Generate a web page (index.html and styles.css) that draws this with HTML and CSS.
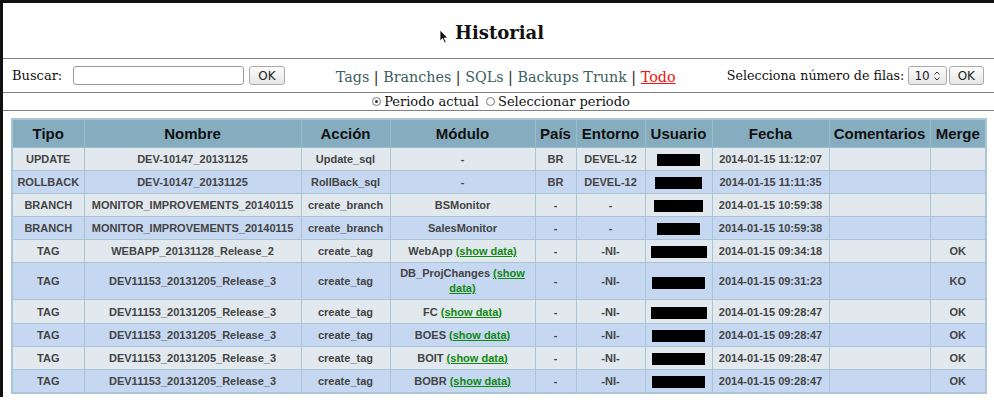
FILE: index.html
```html
<!DOCTYPE html>
<html>
<head>
<meta charset="utf-8">
<link rel="stylesheet" href="styles.css">
</head>
<body>
<div class="frame">
  <div class="titlebar">
    <h1 class="title">Historial</h1>
    <svg class="cursor" width="10" height="15" viewBox="0 0 10 15"><path d="M1 1 L1 12 L3.6 9.6 L5.6 14 L7.2 13.3 L5.3 9 L8.8 9 Z" fill="#111" stroke="#fff" stroke-width="0.8"/></svg>
  </div>
  <div class="toolbar">
    <div class="search">
      <span class="lbl">Buscar:</span>
      <span class="input"></span>
      <span class="btn">OK</span>
    </div>
    <div class="links">
      <a class="lk">Tags</a> | <a class="lk">Branches</a> | <a class="lk">SQLs</a> | <a class="lk">Backups Trunk</a> | <a class="lk active">Todo</a>
    </div>
    <div class="rows">
      <span class="lbl">Selecciona número de filas:</span>
      <span class="select">10<svg width="8" height="12" viewBox="0 0 8 12"><path d="M1.5 4.5 L4 2 L6.5 4.5 M1.5 7.5 L4 10 L6.5 7.5" fill="none" stroke="#333" stroke-width="1"/></svg></span>
      <span class="btn">OK</span>
    </div>
  </div>
  <div class="periods">
    <span class="radio on"></span>Periodo actual <span class="radio second"></span>Seleccionar periodo
  </div>
  <div class="tablewrap">
    <table class="grid">
      <colgroup>
        <col class="c1"><col class="c2"><col class="c3"><col class="c4"><col class="c5"><col class="c6"><col class="c7"><col class="c8"><col class="c9"><col class="c10">
      </colgroup>
      <thead>
        <tr><th>Tipo</th><th>Nombre</th><th>Acción</th><th>Módulo</th><th>País</th><th>Entorno</th><th>Usuario</th><th>Fecha</th><th>Comentarios</th><th>Merge</th></tr>
      </thead>
      <tbody>
        <tr class="odd"><td>UPDATE</td><td>DEV-10147_20131125</td><td>Update_sql</td><td>-</td><td>BR</td><td>DEVEL-12</td><td><span class="redact" style="width:43px"></span></td><td>2014-01-15 11:12:07</td><td></td><td></td></tr>
        <tr class="even"><td>ROLLBACK</td><td>DEV-10147_20131125</td><td>RollBack_sql</td><td>-</td><td>BR</td><td>DEVEL-12</td><td><span class="redact" style="width:47px"></span></td><td>2014-01-15 11:11:35</td><td></td><td></td></tr>
        <tr class="odd"><td>BRANCH</td><td>MONITOR_IMPROVEMENTS_20140115</td><td>create_branch</td><td>BSMonitor</td><td>-</td><td>-</td><td><span class="redact" style="width:49px"></span></td><td>2014-01-15 10:59:38</td><td></td><td></td></tr>
        <tr class="even"><td>BRANCH</td><td>MONITOR_IMPROVEMENTS_20140115</td><td>create_branch</td><td>SalesMonitor</td><td>-</td><td>-</td><td><span class="redact" style="width:43px"></span></td><td>2014-01-15 10:59:38</td><td></td><td></td></tr>
        <tr class="odd"><td>TAG</td><td>WEBAPP_20131128_Release_2</td><td>create_tag</td><td>WebApp <a class="show">(show data)</a></td><td>-</td><td>-NI-</td><td><span class="redact" style="width:56px"></span></td><td>2014-01-15 09:34:18</td><td></td><td>OK</td></tr>
        <tr class="even"><td>TAG</td><td>DEV11153_20131205_Release_3</td><td>create_tag</td><td class="wrap">DB_ProjChanges <a class="show">(show data)</a></td><td>-</td><td>-NI-</td><td><span class="redact" style="width:53px"></span></td><td>2014-01-15 09:31:23</td><td></td><td>KO</td></tr>
        <tr class="odd"><td>TAG</td><td>DEV11153_20131205_Release_3</td><td>create_tag</td><td>FC <a class="show">(show data)</a></td><td>-</td><td>-NI-</td><td><span class="redact" style="width:56px"></span></td><td>2014-01-15 09:28:47</td><td></td><td>OK</td></tr>
        <tr class="even"><td>TAG</td><td>DEV11153_20131205_Release_3</td><td>create_tag</td><td>BOES <a class="show">(show data)</a></td><td>-</td><td>-NI-</td><td><span class="redact" style="width:53px"></span></td><td>2014-01-15 09:28:47</td><td></td><td>OK</td></tr>
        <tr class="odd"><td>TAG</td><td>DEV11153_20131205_Release_3</td><td>create_tag</td><td>BOIT <a class="show">(show data)</a></td><td>-</td><td>-NI-</td><td><span class="redact" style="width:53px"></span></td><td>2014-01-15 09:28:47</td><td></td><td>OK</td></tr>
        <tr class="even"><td>TAG</td><td>DEV11153_20131205_Release_3</td><td>create_tag</td><td>BOBR <a class="show">(show data)</a></td><td>-</td><td>-NI-</td><td><span class="redact" style="width:53px"></span></td><td>2014-01-15 09:28:47</td><td></td><td>OK</td></tr>
      </tbody>
    </table>
  </div>
</div>
</body>
</html>
```
FILE: styles.css
```css
html, body {
  margin: 0;
  padding: 0;
  background: #fff;
}
body {
  font-family: "DejaVu Serif", serif;
  color: #111;
  width: 994px;
  height: 400px;
  overflow: hidden;
}
.frame {
  border-top: 3px solid #111;
  border-left: 3px solid #111;
  height: 397px;
  box-sizing: border-box;
}
.titlebar {
  position: relative;
  height: 55px;
  border-bottom: 1px solid #808080;
  display: flex;
  align-items: center;
  justify-content: center;
}
.title {
  margin: 0;
  font-size: 18px;
  font-weight: bold;
  padding-top: 3px;
  padding-left: 2px;
}
.cursor {
  position: absolute;
  left: 436px;
  top: 26px;
}
.toolbar {
  height: 33px;
  border-bottom: 1px solid #808080;
  display: flex;
  align-items: center;
  justify-content: space-between;
  padding: 0 10px 0 9px;
}
.search, .rows {
  display: flex;
  align-items: center;
  font-size: 13px;
}
.search .lbl { margin-right: 11px; }
.rows .lbl { margin-right: 4px; font-size: 12.7px; }
.input {
  display: inline-block;
  width: 169px;
  height: 17px;
  border: 1px solid #999;
  border-radius: 3px;
  margin-right: 5px;
}
.btn {
  display: inline-flex;
  align-items: center;
  justify-content: center;
  height: 17px;
  padding: 0 8px;
  border: 1px solid #aaa;
  border-radius: 3px;
  background: linear-gradient(#fbfbfb, #e6e6e6);
  font-family: "DejaVu Sans", sans-serif;
  font-size: 12px;
  color: #222;
}
.select {
  display: inline-flex;
  align-items: center;
  height: 17px;
  padding: 0 5px 0 5px;
  gap: 3px;
  border: 1px solid #aaa;
  border-radius: 3px;
  background: linear-gradient(#fbfbfb, #e6e6e6);
  font-family: "DejaVu Sans", sans-serif;
  font-size: 12px;
  margin-right: 2px;
  color: #222;
}
.links {
  font-size: 14.3px;
  color: #222;
  padding-top: 2px;
}
.lk {
  color: #3c6060;
  text-decoration: none;
}
.lk.active {
  color: #ee1111;
  text-decoration: underline;
}
.periods {
  height: 17px;
  border-bottom: 1px solid #808080;
  display: flex;
  align-items: center;
  justify-content: center;
  font-size: 13px;
  padding-left: 2px;
}
.radio {
  display: inline-block;
  width: 9px;
  height: 9px;
  border: 1px solid #777;
  border-radius: 50%;
  margin-right: 3px;
  margin-left: 3px;
  box-sizing: border-box;
  position: relative;
}
.radio.second { margin-left: 7px; }
.radio.on::after {
  content: "";
  position: absolute;
  left: 2px;
  top: 2px;
  width: 3px;
  height: 3px;
  border-radius: 50%;
  background: #333;
}
.tablewrap {
  padding: 7px 9px 0 8px;
}
.grid {
  width: 974px;
  table-layout: fixed;
  border-collapse: collapse;
  font-family: "Liberation Sans", Arial, sans-serif;
  border: 2px solid #a8c6d6;
}
.c1 { width: 72px; }
.c2 { width: 217px; }
.c3 { width: 89px; }
.c4 { width: 145px; }
.c5 { width: 41px; }
.c6 { width: 69px; }
.c7 { width: 67px; }
.c8 { width: 117px; }
.c9 { width: 101px; }
.c10 { width: 56px; }
.grid th {
  background: #86adbf;
  color: #111;
  font-size: 15px;
  font-weight: bold;
  height: 27px;
  padding: 0;
  border: 1px solid #9cbccb;
  text-align: center;
}
.grid td {
  font-size: 11px;
  font-weight: bold;
  color: #444;
  text-align: center;
  padding: 4px 2px;
  line-height: 14px;
  border: 1px solid #a9c4d2;
}
.grid td.wrap {
  line-height: 15px;
  padding: 3px 2px;
}
.grid tr.odd td { background: #e1e9ee; }
.grid tr.even td { background: #c6d7f1; }
.show {
  color: #118811;
  text-decoration: underline;
}
.redact {
  display: inline-block;
  height: 12px;
  background: #000;
  vertical-align: middle;
}
```
